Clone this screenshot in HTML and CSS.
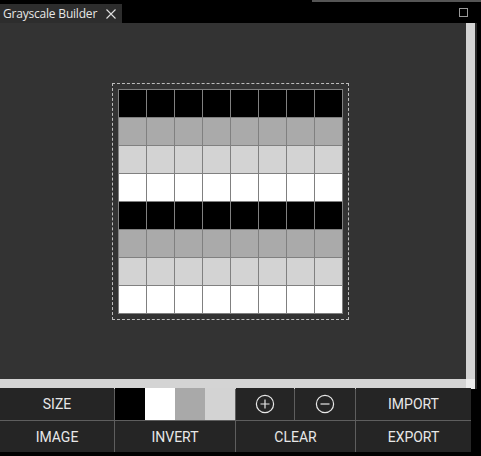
FILE: index.html
```html
<!DOCTYPE html>
<html>
<head>
<meta charset="utf-8">
<link rel="stylesheet" href="styles.css">
</head>
<body>
<div class="window">
  <div class="tabbar">
    <div class="tab">
      <span class="tab-title">Grayscale Builder</span>
      <svg class="tab-close" width="10" height="10" viewBox="0 0 10 10"><path d="M0.5 0.5 L9.5 9.5 M9.5 0.5 L0.5 9.5" stroke="#e0e0e0" stroke-width="1.1" fill="none"/></svg>
    </div>
    <div class="tab-spacer"></div>
    <div class="tab-right">
      <svg class="maximize" width="9" height="9" viewBox="0 0 9 9"><rect x="0.5" y="0.5" width="8" height="8" stroke="#9a9a9a" stroke-width="1" fill="none"/></svg>
    </div>
  </div>
  <div class="main">
    <div class="canvas">
      <div class="selection">
        <div class="grid" id="grid"></div>
      </div>
    </div>
    <div class="vscroll"></div>
    <div class="edge-dark"></div>
    <div class="edge-black"></div>
    <div class="hscroll"></div>
    <div class="corner"></div>
    <div class="edge-dark"></div>
    <div class="edge-black"></div>
  </div>
  <div class="toolbar">
    <div class="btn">SIZE</div>
    <div class="swatches">
      <div class="swatch s-black"></div>
      <div class="swatch s-white"></div>
      <div class="swatch s-gray"></div>
      <div class="swatch s-light"></div>
    </div>
    <div class="btn"><svg width="20" height="20" viewBox="0 0 20 20"><circle cx="10" cy="10" r="8.6" stroke="#e8e8e8" stroke-width="1.2" fill="none"/><path d="M10 5.5 V14.5 M5.5 10 H14.5" stroke="#e8e8e8" stroke-width="1.2"/></svg></div>
    <div class="btn"><svg width="20" height="20" viewBox="0 0 20 20"><circle cx="10" cy="10" r="8.6" stroke="#e8e8e8" stroke-width="1.2" fill="none"/><path d="M5.5 10 H14.5" stroke="#e8e8e8" stroke-width="1.2"/></svg></div>
    <div class="btn">IMPORT</div>
    <div class="btn">IMAGE</div>
    <div class="btn">INVERT</div>
    <div class="btn span2">CLEAR</div>
    <div class="btn">EXPORT</div>
  </div>
</div>
<script>
  var rows = ['#000000','#aaaaaa','#d3d3d3','#ffffff','#000000','#aaaaaa','#d3d3d3','#ffffff'];
  var g = document.getElementById('grid');
  rows.forEach(function(c){
    for (var i = 0; i < 8; i++) {
      var d = document.createElement('div');
      d.className = 'cell';
      d.style.background = c;
      g.appendChild(d);
    }
  });
</script>
</body>
</html>
```
FILE: styles.css
```css
html, body {
  margin: 0;
  padding: 0;
  background: #000;
}
body {
  width: 481px;
  height: 456px;
  overflow: hidden;
  font-family: Roboto, "Liberation Sans", sans-serif;
}
.window {
  width: 481px;
  height: 456px;
  background: #000;
}
.tabbar {
  height: 23px;
  display: flex;
  background: #000;
}
.tab {
  margin-top: 4px;
  width: 122px;
  height: 19px;
  background: #2d2d2d;
  display: flex;
  align-items: center;
  box-sizing: border-box;
  padding-left: 3px;
}
.tab-title {
  font-family: "Open Sans", "Noto Sans", sans-serif;
  font-size: 12px;
  color: #e6e6e6;
  letter-spacing: -0.2px;
}
.tab-close {
  margin-left: auto;
  margin-right: 6px;
}
.tab-spacer {
  flex: 1;
}
.tab-right {
  width: 169px;
  border-top: 2px solid #555;
  display: flex;
  justify-content: flex-end;
  align-items: flex-start;
  padding-right: 13px;
  box-sizing: border-box;
}
.maximize {
  margin-top: 6px;
}
.main {
  display: grid;
  grid-template-columns: 466px 9px 2px 4px;
  grid-template-rows: 356px 10px;
}
.canvas {
  background: #333333;
  display: flex;
  justify-content: center;
  align-items: center;
  padding-right: 6px;
  box-sizing: border-box;
}
.selection {
  border: 1px dashed #bdbdbd;
  padding: 5px;
}
.grid {
  display: grid;
  grid-template-columns: repeat(8, 27px);
  grid-auto-rows: 27px;
  gap: 1px;
  background: #808080;
  border: 1px solid #808080;
}
.vscroll, .hscroll {
  background: #d4d4d4;
}
.corner {
  background: #ececec;
}
.edge-dark {
  background: #2a2a2a;
}
.edge-black {
  background: #000;
}
.toolbar {
  width: 471px;
  display: grid;
  grid-template-columns: 114px 120px 58px 60px 115px;
  grid-template-rows: 32px 31px;
  gap: 1px;
  background: #5e5e5e;
  margin-top: -1px;
}
.btn {
  background: #252525;
  color: #e8e8e8;
  font-size: 14px;
  display: flex;
  align-items: center;
  justify-content: center;
}
.span2 {
  grid-column: span 2;
}
.swatches {
  display: flex;
}
.swatch {
  width: 30px;
}
.s-black { background: #000; }
.s-white { background: #fff; }
.s-gray { background: #a9a9a9; }
.s-light { background: #d3d3d3; }
```
